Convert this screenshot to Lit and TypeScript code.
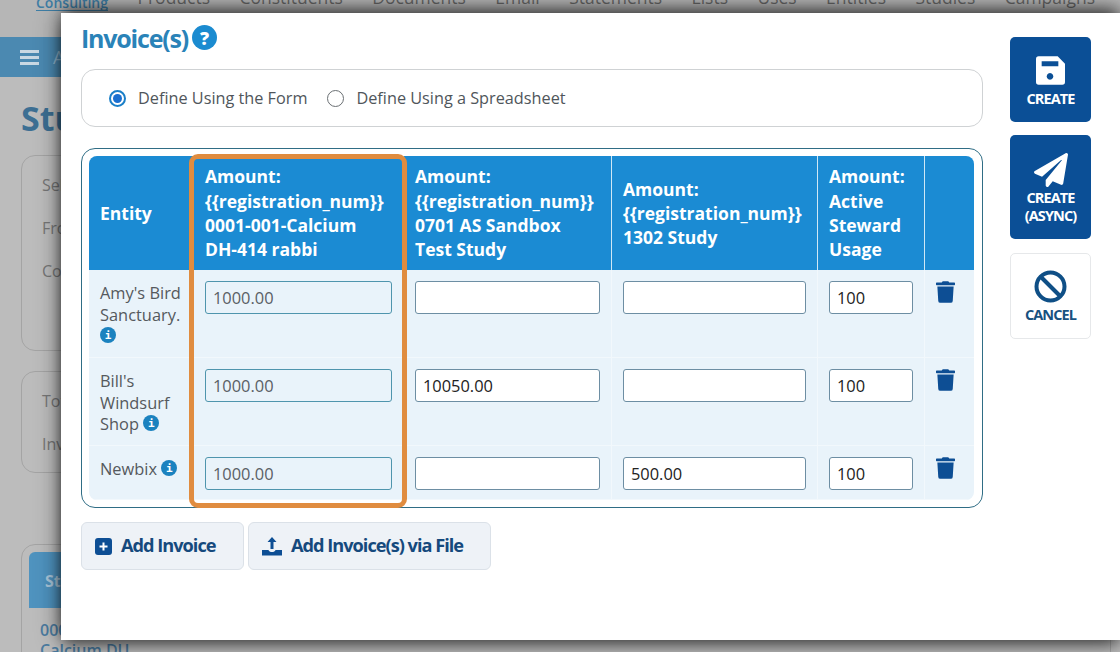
import { LitElement, html, css } from "lit";
import { customElement } from "lit/decorators.js";

const trash = html`<svg class="trash" viewBox="0 0 448 512"><path d="M432 32H312l-9.4-18.7A24 24 0 0 0 281.1 0H166.8a23.72 23.72 0 0 0-21.4 13.3L136 32H16A16 16 0 0 0 0 48v32a16 16 0 0 0 16 16h416a16 16 0 0 0 16-16V48a16 16 0 0 0-16-16zM53.2 467a48 48 0 0 0 47.9 45h245.8a48 48 0 0 0 47.9-45L416 128H32z"/></svg>`;
const info = html`<span class="info">i</span>`;

const headers = [
  ["Amount:", "{{registration_num}}", "0001-001-Calcium", "DH-414 rabbi"],
  ["Amount:", "{{registration_num}}", "0701 AS Sandbox", "Test Study"],
  ["Amount:", "{{registration_num}}", "1302 Study"],
  ["Amount:", "Active", "Steward", "Usage"],
];
const rows = [
  { name: ["Amy's Bird", "Sanctuary."], infoOwn: true, vals: ["1000.00", "", "", "100"] },
  { name: ["Bill's", "Windsurf", "Shop"], infoOwn: false, vals: ["1000.00", "10050.00", "", "100"] },
  { name: ["Newbix"], infoOwn: false, vals: ["1000.00", "", "500.00", "100"] },
];
const nav = ["Products", "Constituents", "Documents", "Email", "Statements", "Lists", "Uses", "Entities", "Studies", "Campaigns"];

@customElement("app-root")
export class AppRoot extends LitElement {
  static styles = css`
    :host { display: block; width: 1120px; height: 652px; position: relative; overflow: hidden; background: #bcbcbc; font-family: "Open Sans", sans-serif; color: #4a4f54; }
    * { box-sizing: border-box; }

    .page { height: 652px; overflow: hidden; }
    .nav { height: 37px; display: flex; align-items: flex-start; padding-left: 36px; gap: 29.400px; font-size: 17.500px; line-height: 18px; color: #666; background: #b6b6b6; }
    .nav span { margin-top: -12px; white-space: nowrap; }
    .nav .consult { font-size: 14px; font-weight: 600; color: #3f7ea5; border-bottom: 1px solid #3f7ea5; margin-top: -3px; height: 14px; line-height: 12px; }
    .bar { height: 40px; background: #4b89b1; display: flex; align-items: center; padding-left: 20px; gap: 14px; color: #8fb6cf; font-size: 18px; }
    .burger { width: 19px; height: 15px; border-top: 3px solid #c9d8e3; border-bottom: 3px solid #c9d8e3; position: relative; }
    .burger::after { content: ""; position: absolute; left: 0; right: 0; top: 3px; height: 3px; background: #c9d8e3; }
    .h1 { margin: 20px 0 0 21px; font-size: 34px; line-height: 42px; font-weight: 700; color: #3d6f93; }
    .ghost { margin-left: 21px; width: 300px; border: 1px solid #a4a4a4; border-radius: 14px; color: #777; font-size: 16px; padding: 0 0 0 20px; }
    .g1 { margin-top: 16px; height: 196px; padding-top: 18px; display: flex; flex-direction: column; gap: 21px; }
    .g2 { margin-top: 20px; height: 102px; padding-top: 18px; display: flex; flex-direction: column; gap: 21px; }
    .g3 { margin-top: 71px; width: 1090px; height: 140px; padding: 7px 0 0 7px; }
    .g3 .hd { height: 56px; background: #4f93bf; border-radius: 6px 6px 0 0; color: #a9c6da; font-weight: 700; padding: 18px 0 0 16px; }
    .g3 .nm { color: #4b7ba0; font-weight: 600; padding: 12px 0 0 11px; line-height: 20px; white-space: nowrap; }

    .modal { position: absolute; left: 61px; top: 13px; right: 0; height: 627px; background: #fff; box-shadow: 0 0 24px rgba(0,0,0,.42), 0 7px 14px -3px rgba(0,0,0,.5), 0 -7px 14px -3px rgba(0,0,0,.5); display: flex; padding: 0 29px 0 20px; gap: 27px; }
    .main { width: 902px; flex: none; display: flex; flex-direction: column; align-items: flex-start; }
    .title { display: flex; align-items: center; gap: 4px; height: 50px; padding-bottom: 1px; font-size: 25px; font-weight: 700; letter-spacing: -1.200px; color: #2a83b8; }
    .qm { width: 25px; height: 25px; border-radius: 50%; background: #1b8bd0; color: #fff; font-size: 18px; font-weight: 800; display: flex; align-items: center; justify-content: center; letter-spacing: 0; }
    .mode { width: 902px; height: 58px; margin-top: 6px; border: 1px solid #cfd2d4; border-radius: 14px; display: flex; align-items: center; padding: 0 0 0 27px; font-size: 16.250px; color: #50565b; }
    .radio { width: 17px; height: 17px; border-radius: 50%; border: 1.500px solid #6a6f73; flex: none; margin-right: 12px; }
    .radio.on { border: 2px solid #1a7fc8; padding: 2px; background: #1a6fd0; background-clip: content-box; }
    .mode .t1 { margin-right: 20px; }

    .wrap { position: relative; width: 902px; height: 360px; margin-top: 21px; border: 1px solid #2f6d85; border-radius: 14px; padding: 7px 8px 7px 7px; }
    .grid { display: grid; grid-template-columns: 104px 210px 208px 206px 107px 50px; grid-template-rows: 114px 88px 88px 54px; background: #e9f3fa; border-radius: 8px; overflow: hidden; }
    .th { background: #1b8bd3; color: #fff; font-weight: 700; font-size: 17.500px; line-height: 24.300px; padding: 0 0 0 11px; display: flex; flex-direction: column; justify-content: center; border-left: 1px solid #cfe8f6; white-space: nowrap; }
    .th:first-child { border-left: 0; }
    .td { padding: 11px 11px 0 11px; border-left: 1px solid #f2f8fc; border-bottom: 1px solid #f2f8fc; }
    .td.name { border-left: 0; padding: 12px 0 0 11px; font-size: 16.400px; line-height: 21.500px; color: #55595d; }
    .field { height: 33px; width: 100%; border: 1px solid #6d8ea3; border-radius: 3px; background: #fff; font-size: 16.400px; line-height: 31px; padding-left: 7px; color: #222; }
    .field.ro { background: #e9f3fa; color: #5a6065; border-color: #4f95ad; }
    .info { display: inline-flex; width: 16px; height: 16px; border-radius: 50%; background: #1b82bf; color: #fff; font-size: 11px; font-weight: 800; align-items: center; justify-content: center; vertical-align: top; margin-top: 2px; font-family: "DejaVu Sans Mono", monospace; line-height: 1; }
    .trash { width: 19px; height: 22px; fill: #0d4e94; display: block; }
    .hl { position: absolute; left: 107px; top: 5px; width: 218px; height: 354px; border: 5px solid #e08c3f; border-radius: 9px; pointer-events: none; }

    .adds { display: flex; gap: 4px; margin-top: 14px; }
    .add { height: 48px; display: flex; align-items: center; gap: 9px; background: #eef2f7; border: 1px solid #dbe1e8; border-radius: 6px; color: #15497d; font-size: 18.200px; font-weight: 700; letter-spacing: -1px; padding: 0 0 2px 13px; white-space: nowrap; }
    .add svg { margin-top: 2px; flex: none; }
    .add.a { width: 163px; }
    .add.b { width: 243px; }

    .side { width: 82px; flex: none; padding-top: 24px; display: flex; flex-direction: column; }
    .btn { width: 81px; border-radius: 5px; background: #0b4f96; color: #fff; display: flex; flex-direction: column; align-items: center; font-size: 14.500px; line-height: 18px; font-weight: 700; letter-spacing: -.9px; text-align: center; }
    .btn.c1 { height: 85px; padding-top: 19px; gap: 5px; }
    .btn.c2 { height: 104px; margin-top: 13px; padding-top: 18px; gap: 2px; }
    .btn.c3 { height: 86px; margin-top: 14px; padding-top: 16px; gap: 3px; background: #fff; border: 1px solid #e6e8ea; color: #19527f; }
  `;

  render() {
    return html`
      <div class="page">
        <div class="nav">
          <span class="consult">Consulting</span>
          ${nav.map((n) => html`<span>${n}</span>`)}
        </div>
        <div class="bar"><div class="burger"></div><span>A</span></div>
        <div class="h1">Stu</div>
        <div class="ghost g1"><span>Sel</span><span>From</span><span>Con</span></div>
        <div class="ghost g2"><span>Tot</span><span>Inv</span></div>
        <div class="ghost g3"><div class="hd">St</div><div class="nm">000<br />Calcium DU</div></div>
      </div>
      <div class="modal">
        <div class="main">
          <div class="title">Invoice(s) <span class="qm">?</span></div>
          <div class="mode">
            <span class="radio on"></span><span class="t1">Define Using the Form</span>
            <span class="radio"></span><span>Define Using a Spreadsheet</span>
          </div>
          <div class="wrap">
            <div class="grid">
              <div class="th">Entity</div>
              ${headers.map((h) => html`<div class="th">${h.map((l) => html`<div>${l}</div>`)}</div>`)}
              <div class="th"></div>
              ${rows.map((r) => html`
                <div class="td name">
                  ${r.name.map((l, i) => html`<div>${l}${!r.infoOwn && i === r.name.length - 1 ? html` ${info}` : ""}</div>`)}
                  ${r.infoOwn ? html`<div>${info}</div>` : ""}
                </div>
                ${r.vals.map((v, i) => html`<div class="td"><div class="field ${i === 0 ? "ro" : ""}">${v}</div></div>`)}
                <div class="td">${trash}</div>
              `)}
            </div>
            <div class="hl"></div>
          </div>
          <div class="adds">
            <div class="add a">
              <svg width="17" height="17" viewBox="0 0 17 17"><rect width="17" height="17" rx="3" fill="#0d4e94"/><path d="M8.500 4.500v8M4.500 8.500h8" stroke="#fff" stroke-width="2"/></svg>
              Add Invoice
            </div>
            <div class="add b">
              <svg width="20" height="20" viewBox="0 0 20 20" fill="#0d4e94"><path d="M10 1l4.500 5H11.500v7h-3V6H5.500z"/><path d="M0 14h6.500c.5 1.500 1.800 2 3.500 2s3-.5 3.500-2H20v5.500H0z"/></svg>
              Add Invoice(s) via File
            </div>
          </div>
        </div>
        <div class="side">
          <div class="btn c1">
            <svg width="29" height="29" viewBox="0 0 87 85"><path fill="#fff" fill-rule="evenodd" d="M8 0H65L87 22V77a8 8 0 0 1-8 8H8a8 8 0 0 1-8-8V8a8 8 0 0 1 8-8zM17 15V30H67V15zM42 50a10 10 0 1 0 .01 0z"/></svg>
            <span>CREATE</span>
          </div>
          <div class="btn c2">
            <svg width="34" height="34" viewBox="0 0 512 512"><path fill="#fff" d="M476 3.200L12.500 270.600c-18.100 10.400-15.800 35.600 2.200 43.200L121 358.400l287.300-253.200c5.500-4.900 13.300 2.600 8.600 8.300L176 407v80.500c0 23.600 28.500 32.900 42.500 15.800L282 426l124.600 52.200c14.200 6 30.400-2.900 33-18.200l72-432C515 7.800 493.300-6.800 476 3.200z"/></svg>
            <span>CREATE<br />(ASYNC)</span>
          </div>
          <div class="btn c3">
            <svg width="33" height="33" viewBox="0 0 33 33" fill="none" stroke="#0f4f86" stroke-width="4"><circle cx="16.500" cy="16.500" r="14"/><path d="M6.500 6.500l20 20"/></svg>
            <span>CANCEL</span>
          </div>
        </div>
      </div>
    `;
  }
}
